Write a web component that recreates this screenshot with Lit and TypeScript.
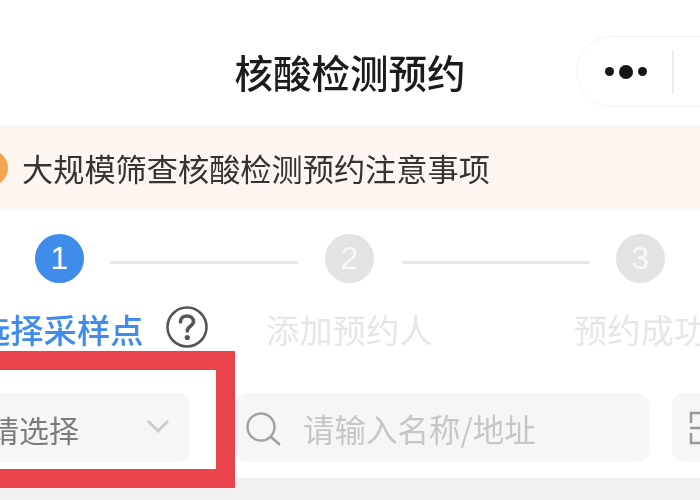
import { LitElement, html, css } from "lit";
import { customElement } from "lit/decorators.js";

@customElement("app-root")
export class AppRoot extends LitElement {
  static styles = css`
    :host {
      display: block;
      position: relative;
      width: 700px;
      height: 500px;
      overflow: hidden;
      background: #fff;
      font-family: "Noto Sans CJK SC", "Liberation Sans", sans-serif;
    }
    .page { display: flex; flex-direction: column; height: 500px; filter: blur(0.5px); }
    .nav { position: relative; height: 125px; flex: none; display: flex; justify-content: center; align-items: center; }
    .title { font-size: 38.500px; font-weight: 500; color: #1c1c1c; line-height: 1; margin-top: 17px; }
    .capsule {
      position: absolute; left: 576px; top: 36px; width: 180px; height: 71px; box-sizing: border-box;
      border: 1.5px solid #f2f2f2; border-radius: 36px; display: flex; align-items: center;
    }
    .dots { display: flex; align-items: center; gap: 5px; margin-left: 28px; width: 67px; }
    .dot { width: 9px; height: 9px; border-radius: 50%; background: #151515; }
    .dot.big { width: 14px; height: 14px; }
    .sep { width: 1.5px; height: 42px; background: #ececec; }
    .banner { height: 85px; flex: none; background: #fcf5f0; display: flex; align-items: center; gap: 14px; margin-left: -28px; }
    .bullet { width: 36px; height: 36px; border-radius: 50%; background: #f2a654; flex: none; }
    .banner span { font-size: 31.2px; color: #333; line-height: 1; }
    .track { display: flex; align-items: center; padding: 24px 0 0 35px; flex: none; }
    .circle {
      width: 49px; height: 49px; border-radius: 50%; background: #e3e3e3; color: #f7f7f7; flex: none;
      display: flex; align-items: center; justify-content: center; font: 32px "Liberation Sans", sans-serif;
    }
    .circle.on { background: #3f8ceb; color: #fff; }
    .line { height: 3px; background: #e6e6e6; width: 188px; flex: none; margin-top: 7px; }
    .g1 { margin-left: 26px; margin-right: 27px; }
    .g2 { margin-left: 28px; margin-right: 26px; }
    .labels { display: flex; align-items: center; margin: 24px 0 0 -23px; height: 44px; flex: none; }
    .lab { font-size: 33.300px; line-height: 1; color: #e6e6e6; white-space: nowrap; flex: none; }
    .lab.on { color: #3f8ceb; font-weight: 500; width: 164px; }
    .help { margin: -5px 58px 0 25px; width: 42px; height: 42px; flex: none; display: block; }
    .lab.two { width: 165px; margin-right: 143px; }
    .filters { display: flex; margin: 42px 0 0 -20px; gap: 23px; flex: none; height: 69px; }
    .box { background: #f6f6f6; border-radius: 12px; display: flex; align-items: center; flex: none; }
    .box span { padding-top: 3px; line-height: 1; }
    .select { width: 210px; margin-right: 22px; color: #7b7b7b; padding-left: 9px; box-sizing: border-box; font-size: 30px; }
    .select span { flex: 1; }
    .chev { width: 24px; height: 14px; margin: -4px 20px 0 0; }
    .search { width: 414px; color: #c6c6c6; padding-left: 11px; box-sizing: border-box; gap: 21px; font-size: 31.500px; }
    .search svg { width: 36px; height: 34px; flex: none; margin-top: 3px; }
    .scan { width: 60px; padding-left: 17px; box-sizing: border-box; }
    .scan svg { width: 32px; height: 34px; flex: none; margin-top: 1px; }
    .rest { flex: 1; margin-top: 16px; background: #f1f1f1; }
    .mark {
      position: absolute; left: -30px; top: 351px; width: 265px; height: 137px; box-sizing: border-box;
      border: 19.5px solid #e9444c;
    }
  `;

  render() {
    return html`
      <div class="page">
        <div class="nav">
          <div class="title">核酸检测预约</div>
          <div class="capsule">
            <div class="dots"><i class="dot"></i><i class="dot big"></i><i class="dot"></i></div>
            <div class="sep"></div>
          </div>
        </div>
        <div class="banner"><i class="bullet"></i><span>大规模筛查核酸检测预约注意事项</span></div>
        <div class="track">
          <div class="circle on">1</div>
          <div class="line g1"></div>
          <div class="circle">2</div>
          <div class="line g2"></div>
          <div class="circle">3</div>
        </div>
        <div class="labels">
          <div class="lab on">选择采样点</div>
          <svg class="help" viewBox="0 0 42 42" fill="none">
            <circle cx="21" cy="21" r="19.500" stroke="#555" stroke-width="2.600"></circle>
            <path d="M14.500 16c0-3.600 2.800-6 6.500-6s6.500 2.300 6.500 5.500c0 4.500-6.200 4.800-6.200 9.500" stroke="#555" stroke-width="3.600" stroke-linecap="round"></path>
            <circle cx="21.300" cy="31.500" r="2.600" fill="#555"></circle>
          </svg>
          <div class="lab two">添加预约人</div>
          <div class="lab">预约成功</div>
        </div>
        <div class="filters">
          <div class="box select">
            <span>请选择</span>
            <svg class="chev" viewBox="0 0 24 14" fill="none"><path d="M2 2l10 10L22 2" stroke="#cdcdcd" stroke-width="3"></path></svg>
          </div>
          <div class="box search">
            <svg viewBox="0 0 36 34" fill="none">
              <circle cx="15" cy="15" r="13.500" stroke="#a2a2a2" stroke-width="2.400"></circle>
              <path d="M25 25l8 7" stroke="#a2a2a2" stroke-width="2.800" stroke-linecap="round"></path>
            </svg>
            <span>请输入名称/地址</span>
          </div>
          <div class="box scan">
            <svg viewBox="0 0 32 34" fill="none" stroke="#999" stroke-width="2.500">
              <path d="M12 2H2v10M12 32H2V22M1 17h31"></path>
            </svg>
          </div>
        </div>
        <div class="rest"></div>
      </div>
      <div class="mark"></div>
    `;
  }
}
